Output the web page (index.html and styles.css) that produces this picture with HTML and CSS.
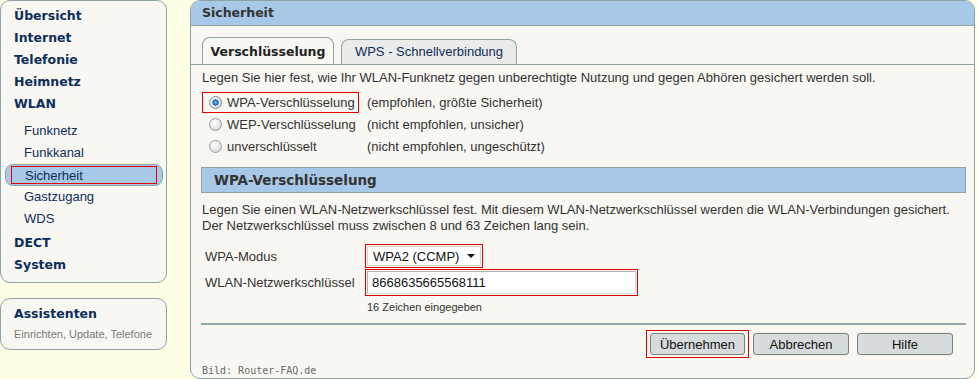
FILE: index.html
```html
<!DOCTYPE html>
<html lang="de">
<head>
<meta charset="utf-8">
<title>Sicherheit</title>
<link rel="stylesheet" href="styles.css">
</head>
<body>
<div class="page">
  <aside class="side">
    <nav class="navbox">
      <a class="nav-main first">Übersicht</a>
      <a class="nav-main">Internet</a>
      <a class="nav-main">Telefonie</a>
      <a class="nav-main">Heimnetz</a>
      <a class="nav-main">WLAN</a>
      <div class="subnav">
        <a class="nav-sub">Funknetz</a>
        <a class="nav-sub">Funkkanal</a>
        <a class="nav-sub active"><span class="mark">Sicherheit</span></a>
        <a class="nav-sub">Gastzugang</a>
        <a class="nav-sub">WDS</a>
      </div>
      <a class="nav-main dect">DECT</a>
      <a class="nav-main">System</a>
    </nav>
    <div class="assist">
      <div class="assist-title">Assistenten</div>
      <div class="assist-sub">Einrichten, Update, Telefone</div>
    </div>
  </aside>

  <main class="panel">
    <header class="panel-head">Sicherheit</header>
    <div class="tabs">
      <div class="tab active">Verschlüsselung</div>
      <div class="tab">WPS - Schnellverbindung</div>
    </div>
    <div class="content">
      <p class="intro">Legen Sie hier fest, wie Ihr WLAN-Funknetz gegen unberechtigte Nutzung und gegen Abhören gesichert werden soll.</p>
      <div class="radios">
        <div class="opt marked"><span class="radio on"></span><span>WPA-Verschlüsselung</span></div>
        <div class="hint">(empfohlen, größte Sicherheit)</div>
        <div class="opt"><span class="radio"></span><span>WEP-Verschlüsselung</span></div>
        <div class="hint">(nicht empfohlen, unsicher)</div>
        <div class="opt"><span class="radio"></span><span>unverschlüsselt</span></div>
        <div class="hint">(nicht empfohlen, ungeschützt)</div>
      </div>
      <h2 class="band">WPA-Verschlüsselung</h2>
      <p class="desc">Legen Sie einen WLAN-Netzwerkschlüssel fest. Mit diesem WLAN-Netzwerkschlüssel werden die WLAN-Verbindungen gesichert.<br>Der Netzwerkschlüssel muss zwischen 8 und 63 Zeichen lang sein.</p>
      <div class="form">
        <label class="flabel">WPA-Modus</label>
        <div class="redbox sel-box">
          <div class="select"><span>WPA2 (CCMP)</span><span class="caret"></span></div>
        </div>
        <label class="flabel">WLAN-Netzwerkschlüssel</label>
        <div class="redbox key-box">
          <div class="input">8668635665568111</div>
        </div>
        <div></div>
        <div class="count">16 Zeichen eingegeben</div>
      </div>
      <div class="sep"></div>
      <div class="buttons">
        <div class="redbox btn-box"><button class="btn">Übernehmen</button></div>
        <button class="btn abort">Abbrechen</button>
        <button class="btn help">Hilfe</button>
      </div>
      <div class="credit">Bild: Router-FAQ.de</div>
    </div>
  </main>
</div>
</body>
</html>
```

FILE: styles.css
```css
* { box-sizing: border-box; }

html, body {
  margin: 0;
  padding: 0;
  background: #fefee4;
  height: 379px;
  overflow: hidden;
}

body {
  font-family: "Liberation Sans", Arial, sans-serif;
  font-size: 13px;
  color: #333;
}

.page {
  display: flex;
  align-items: flex-start;
}

/* ---------- side navigation ---------- */
.side {
  width: 167px;
  flex: none;
  display: flex;
  flex-direction: column;
  gap: 15px;
}

.navbox {
  display: flex;
  flex-direction: column;
  height: 283px;
  background: #f8f7f2;
  border: 1px solid #8ea3a5;
  border-radius: 10px;
  padding: 4px 0 0 0;
}

.nav-main {
  display: block;
  height: 22px;
  line-height: 22px;
  padding-left: 13px;
  font-family: "DejaVu Sans", Verdana, sans-serif;
  font-weight: bold;
  font-size: 12.5px;
  color: #0d2e5a;
}

.subnav {
  display: flex;
  flex-direction: column;
  margin: 5px 0 2px;
}

.nav-sub {
  display: block;
  height: 22px;
  line-height: 22px;
  padding-left: 23px;
  font-size: 13px;
  color: #0d2e5a;
}

.nav-sub.active {
  margin: 0 3px 0 4px;
  height: 22px;
  padding: 1px 5px 0 5px;
  background: #a7c8e6;
  border: 1px solid #8ea3a5;
  border-radius: 8px;
  line-height: normal;
}

.nav-sub.active .mark {
  display: block;
  height: 18px;
  line-height: 17px;
  border: 1px solid #e00000;
  padding-left: 13px;
}

.assist {
  height: 52px;
  background: #f8f7f2;
  border: 1px solid #8ea3a5;
  border-radius: 10px;
  padding: 6px 0 0 13px;
}

.assist-title {
  font-family: "DejaVu Sans", Verdana, sans-serif;
  font-weight: bold;
  font-size: 12.5px;
  color: #0d2e5a;
  line-height: 18px;
}

.assist-sub {
  margin-top: 4px;
  font-size: 11px;
  color: #7a7a7a;
  line-height: 14px;
}

/* ---------- main panel ---------- */
.panel {
  margin-left: 23px;
  width: 785px;
  height: 379px;
  background: #f8f7f2;
  border: 1px solid #8ea3a5;
  border-radius: 10px;
  overflow: hidden;
  display: flex;
  flex-direction: column;
}

.panel-head {
  height: 25px;
  line-height: 24px;
  background: #a7c8e6;
  border-bottom: 1px solid #8ea3a5;
  padding-left: 11px;
  font-family: "DejaVu Sans", Verdana, sans-serif;
  font-weight: bold;
  font-size: 12.5px;
  color: #333;
}

.tabs {
  display: flex;
  align-items: flex-end;
  gap: 7px;
  margin-top: 11px;
  padding-left: 11px;
  border-bottom: 1px solid #8ea3a5;
}

.tab {
  height: 25px;
  width: 176px;
  text-align: center;
  line-height: 24px;
  border: 1px solid #8ea3a5;
  border-bottom: none;
  border-radius: 8px 8px 0 0;
  background: #ebebe9;
  color: #0d2e5a;
}

.tab.active {
  height: 27px;
  width: 132px;
  line-height: 27px;
  background: #f8f7f2;
  font-family: "DejaVu Sans", Verdana, sans-serif;
  font-weight: bold;
  font-size: 12.5px;
  color: #222;
}

.content {
  flex: 1;
  padding: 0 8px 0 10px;
  display: flex;
  flex-direction: column;
}

.intro {
  margin: 5px 0 0 1px;
  line-height: 16px;
  color: #333;
}

.radios {
  margin-top: 5px;
  display: grid;
  grid-template-columns: 166px auto;
  grid-auto-rows: 22px;
  align-items: center;
}

.opt {
  display: flex;
  align-items: center;
  height: 21px;
  padding-left: 6px;
  gap: 5px;
  margin-left: 1px;
  border: 1px solid transparent;
  width: 157px;
}

.opt.marked {
  border-color: #e00000;
}

.radio {
  width: 13px;
  height: 13px;
  border-radius: 50%;
  border: 1px solid #9a9a9a;
  background: radial-gradient(circle at 40% 35%, #ffffff 0%, #e6e6e6 55%, #c8c8c8 100%);
  flex: none;
}

.radio.on {
  border-color: #7a8a99;
  background:
    radial-gradient(circle at 50% 50%, #6fc0ff 0%, #2a7fd0 26%, #1a4f8a 38%, transparent 42%),
    radial-gradient(circle at 40% 35%, #ffffff 0%, #e6e6e6 55%, #c8c8c8 100%);
}

.hint {
  color: #333;
}

.band {
  margin: 10px 0 0 0;
  height: 26px;
  line-height: 24px;
  background: #a7c8e6;
  border: 1px solid #8ea3a5;
  padding-left: 12px;
  font-family: "DejaVu Sans", Verdana, sans-serif;
  font-weight: bold;
  font-size: 13.5px;
  color: #333;
}

.desc {
  margin: 9px 0 0 1px;
  line-height: 16px;
}

.form {
  margin-top: 10px;
  display: grid;
  grid-template-columns: 164px auto;
  align-items: center;
}

.flabel {
  padding-left: 4px;
}

.redbox {
  border: 1px solid #e00000;
  padding: 1px;
}

.sel-box {
  width: 118px;
  height: 24px;
}

.select {
  height: 20px;
  background: #fff;
  border: 1px solid #d6d6d6;
  border-radius: 2px;
  display: flex;
  align-items: center;
  justify-content: space-between;
  padding: 0 5px 0 5px;
  color: #111;
  font-size: 13px;
}

.caret {
  width: 0;
  height: 0;
  border-left: 4px solid transparent;
  border-right: 4px solid transparent;
  border-top: 4px solid #111;
}

.key-box {
  margin-top: 1px;
  width: 273px;
  height: 27px;
}

.input {
  height: 23px;
  background: #fff;
  border: 1px solid #b4b4b4;
  border-bottom-color: #e0e0e0;
  border-right-color: #e0e0e0;
  padding-left: 4px;
  line-height: 21px;
  color: #111;
  font-size: 13px;
}

.count {
  margin-top: 4px;
  padding-left: 2px;
  font-size: 11px;
  line-height: 14px;
  color: #333;
}

.sep {
  margin-top: 9px;
  height: 2px;
  background: #95a8a8;
}

.buttons {
  display: flex;
  justify-content: flex-end;
  align-items: center;
  margin-top: 5px;
  padding-right: 13px;
}

.btn-box {
  padding: 2px 3px;
}

.btn {
  display: block;
  height: 22px;
  width: 95px;
  margin: 0;
  padding: 0;
  background: #d6dbdd;
  border: 1px solid #7d7d7d;
  border-radius: 3px;
  font-family: "Liberation Sans", Arial, sans-serif;
  font-size: 13px;
  color: #111;
}

.abort {
  margin-left: 4px;
  width: 96px;
}

.help {
  margin-left: 8px;
  width: 96px;
}

.credit {
  margin-top: 6px;
  padding-left: 1px;
  font-family: "DejaVu Sans Mono", monospace;
  font-size: 10px;
  line-height: 13px;
  color: #6a6a6a;
}
```
